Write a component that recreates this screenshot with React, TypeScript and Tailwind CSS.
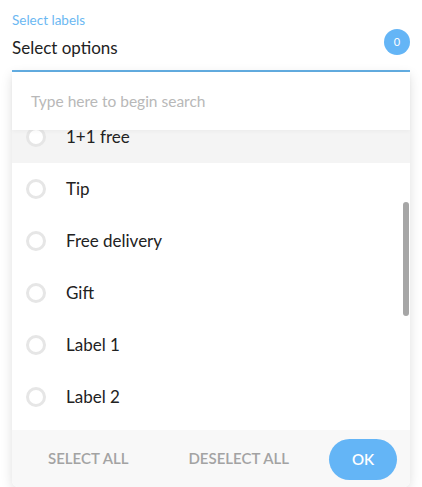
import React from 'react';

const options = ['1+1 free', 'Tip', 'Free delivery', 'Gift', 'Label 1', 'Label 2'];

const App = () => {
  return (
    <div className="w-[422px] h-[487px] bg-white overflow-hidden font-['Lato',sans-serif]">
      <div className="mx-3 pt-3">
        <div className="text-[13.5px] leading-4 text-[#6bb8f2]">Select labels</div>
        <div className="h-[44px] flex items-center justify-between border-b-2 border-[#64b0e6]">
          <span className="text-[17px] text-[#222] -mt-[2px]">Select options</span>
          <span className="w-[26px] h-[26px] rounded-full bg-[#64b5f6] text-white text-[11px] flex items-center justify-center -mt-[14px]">
            0
          </span>
        </div>

        <div className="relative bg-white rounded-b-md shadow-[0_3px_12px_rgba(0,0,0,0.13)]">
          <div className="relative z-10 h-[58px] flex items-center px-[19px] bg-white shadow-[0_2px_4px_rgba(0,0,0,0.03)]">
            <span className="text-[15.5px] text-[#b8b8b8] mt-[1px]">Type here to begin search</span>
          </div>

          <div className="relative h-[300px] overflow-hidden">
            <div className="-mt-[19px]">
              {options.map((opt, i) => (
                <div
                  key={opt}
                  className={`h-[52px] flex items-center pl-[14px] ${i === 0 ? 'bg-[#f4f4f4]' : 'bg-white'}`}
                >
                  <span className="w-5 h-5 rounded-full border-[3px] border-[#e6e6e6] bg-white" />
                  <span className="ml-5 text-[17px] text-[#222]">{opt}</span>
                </div>
              ))}
            </div>
            {/* scrollbar thumb */}
            <div className="absolute right-[1px] top-[72px] w-[6px] h-[114px] rounded-full bg-[#a6a6a6]" />
          </div>

          <div className="h-[57px] bg-[#f8f8f8] flex items-center pl-9 pr-3 rounded-b-md">
            <button className="text-[15px] font-semibold text-[#a3a3a3] whitespace-nowrap">SELECT ALL</button>
            <button className="ml-[60px] text-[15px] font-semibold text-[#a3a3a3] whitespace-nowrap">DESELECT ALL</button>
            <button className="ml-auto mr-[1px] w-[68px] h-[41px] mt-[2px] rounded-full bg-[#64b5f6] text-white text-[15px] font-semibold">
              OK
            </button>
          </div>
        </div>
      </div>
    </div>
  );
};

export default App;
